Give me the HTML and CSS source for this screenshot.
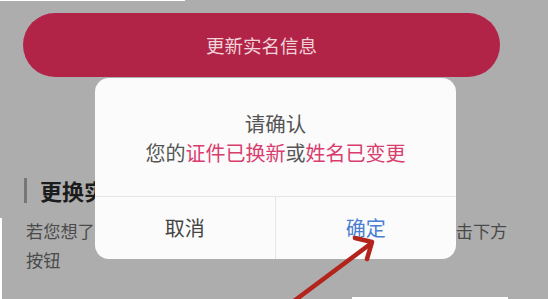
FILE: index.html
```html
<!DOCTYPE html>
<html lang="zh-CN">
<head>
  <meta charset="UTF-8">
  <meta name="viewport" content="width=device-width, initial-scale=1.0">
  <title>更新实名信息</title>
  <link rel="stylesheet" href="styles.css">
</head>
<body>
  <div class="page">
    <div class="update-button">更新实名信息</div>

    <div class="section">
      <h3 class="section-title">更换实名信息</h3>
      <p class="section-text">若您想了解更换实名信息的具体流程和注意事项，请您点击下方按钮</p>
    </div>
  </div>

  <!-- 确认弹窗 -->
  <div class="dialog">
    <div class="dialog-body">
      <div class="dialog-title">请确认</div>
      <div class="dialog-message">您的<span class="hl">证件已换新</span>或<span class="hl">姓名已变更</span></div>
    </div>
    <div class="dialog-actions">
      <div class="dialog-button cancel">取消</div>
      <div class="dialog-button confirm">确定</div>
    </div>
  </div>

  <svg class="arrow" width="548" height="299" viewBox="0 0 548 299">
    <line x1="290" y1="304" x2="369" y2="245" stroke="#b3241d" stroke-width="4.5" stroke-linecap="round"/>
    <polyline points="355,238 372,242 367,259" fill="none" stroke="#b3241d" stroke-width="4.5" stroke-linecap="round" stroke-linejoin="round"/>
  </svg>

  <div class="edge edge-top"></div>
  <div class="edge edge-left"></div>
  <div class="edge edge-bottom"></div>
</body>
</html>
```

FILE: styles.css
```css
body {
  font-family: "Noto Sans CJK SC", "Noto Sans", sans-serif;
  background-color: #adadad;
  margin: 0;
  padding: 0;
  width: 548px;
  height: 299px;
  overflow: hidden;
  position: relative;
}

.page {
  padding-top: 13px;
}

.update-button {
  margin: 0 48px 0 23px;
  height: 64px;
  border-radius: 32px;
  background-color: #b22447;
  color: #f0d2d9;
  font-size: 18.5px;
  display: flex;
  align-items: center;
  justify-content: center;
}

.section {
  margin-top: 101px;
}

.section-title {
  margin: 0 0 0 24px;
  border-left: 3px solid #777777;
  padding-left: 13px;
  height: 25px;
  line-height: 25px;
  font-size: 22px;
  font-weight: bold;
  color: #1c1c1c;
}

.section-text {
  margin: 13px 0 0 26px;
  width: 486px;
  font-size: 17.2px;
  line-height: 29px;
  color: #4a4a4a;
}

.dialog {
  position: absolute;
  left: 95px;
  top: 78px;
  width: 361px;
  height: 181px;
  border-radius: 14px;
  background-color: #fbfbfb;
  display: flex;
  flex-direction: column;
  overflow: hidden;
}

.dialog-body {
  height: 119px;
  box-sizing: border-box;
  padding-top: 31px;
  border-bottom: 1px solid #e6e6e6;
  text-align: center;
  color: #555555;
  line-height: 29px;
}

.dialog-title {
  font-size: 20.5px;
}

.dialog-message {
  font-size: 20px;
}

.hl {
  color: #d93d6e;
}

.dialog-actions {
  flex: 1;
  display: grid;
  grid-template-columns: 1fr 1fr;
}

.dialog-button {
  display: flex;
  align-items: center;
  justify-content: center;
  font-size: 20px;
  padding-bottom: 2px;
}

.cancel {
  color: #444444;
  border-right: 1px solid #e6e6e6;
}

.confirm {
  color: #4a7ed3;
}

.arrow {
  position: absolute;
  left: 0;
  top: 0;
  pointer-events: none;
}

.edge {
  position: absolute;
  background-color: #ffffff;
}

.edge-top {
  left: 0;
  top: 0;
  width: 185px;
  height: 1px;
}

.edge-left {
  left: 0;
  top: 218px;
  width: 2px;
  height: 81px;
}

.edge-bottom {
  left: 352px;
  top: 297px;
  width: 156px;
  height: 2px;
}
```
